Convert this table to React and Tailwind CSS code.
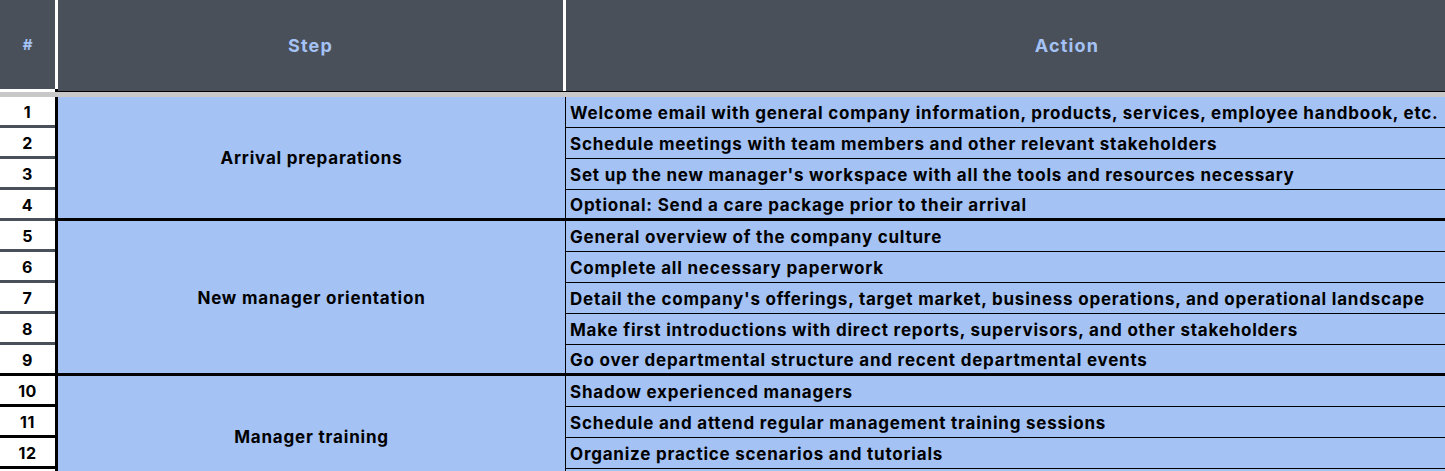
import React from "react";

const groups = [
  {
    step: "Arrival preparations",
    start: 1,
    black: false,
    actions: [
      "Welcome email with general company information, products, services, employee handbook, etc.",
      "Schedule meetings with team members and other relevant stakeholders",
      "Set up the new manager's workspace with all the tools and resources necessary",
      "Optional: Send a care package prior to their arrival",
    ],
  },
  {
    step: "New manager orientation",
    start: 5,
    black: false,
    actions: [
      "General overview of the company culture",
      "Complete all necessary paperwork",
      "Detail the company's offerings, target market, business operations, and operational landscape",
      "Make first introductions with direct reports, supervisors, and other stakeholders",
      "Go over departmental structure and recent departmental events",
    ],
  },
  {
    step: "Manager training",
    start: 10,
    black: true,
    actions: [
      "Shadow experienced managers",
      "Schedule and attend regular management training sessions",
      "Organize practice scenarios and tutorials",
      "Review performance management and feedback processes",
    ],
  },
];

function Group({ g }) {
  return (
    <div className="flex">
      <div className="flex w-[55px] shrink-0 flex-col">
        {g.actions.map((_, i) => {
          const isLast = i === g.actions.length - 1;
          const black = g.black || (isLast && g.start === 5);
          return (
            <div
              key={i}
              className={
                "flex h-[31px] items-center justify-center border-b-[3px] bg-white pt-[1px] text-[16px] font-bold tracking-[0.5px] text-black " +
                (black ? "border-black" : "border-[#4a5059]")
              }
            >
              {g.start + i}
            </div>
          );
        })}
      </div>
      <div className="w-[3px] shrink-0 bg-black" />
      <div className="flex shrink-0 border-b-[3px] border-black">
        <div className="flex w-[507px] shrink-0 items-center justify-center bg-[#a4c2f4] pt-[3px] text-[17px] font-bold tracking-[0.8px] text-black">
          {g.step}
        </div>
        <div className="flex w-[1002px] shrink-0 flex-col border-l border-black bg-[#a4c2f4]">
          {g.actions.map((a, i) => {
            const isLast = i === g.actions.length - 1;
            return (
              <div
                key={i}
                className={
                  "flex items-center whitespace-nowrap pl-[4px] pt-[3px] text-[17px] font-bold tracking-[0.78px] text-black " +
                  (isLast ? "h-[28px]" : "h-[31px] border-b border-black")
                }
              >
                {a}
              </div>
            );
          })}
        </div>
      </div>
    </div>
  );
}

export default function App() {
  return (
    <div
      className="h-[471px] w-[1445px] overflow-hidden bg-white"
      style={{ fontFamily: "Inter, 'Liberation Sans', sans-serif" }}
    >
      <div className="w-[1570px]">
        <div className="flex h-[92px]">
          <div className="flex w-[55px] shrink-0 items-center justify-center border-b-[3px] border-white bg-[#4a5059] pt-[2px] text-[15px] font-bold text-[#a4c2f4]">
            #
          </div>
          <div className="flex w-[3px] shrink-0 flex-col">
            <div className="flex-1 bg-white" />
            <div className="h-[3px] bg-black" />
          </div>
          <div className="flex w-[505px] shrink-0 items-center justify-center border-b border-black bg-[#4a5059] text-[18px] font-bold tracking-[1.2px] text-[#a4c2f4]">
            Step
          </div>
          <div className="w-[3px] shrink-0 border-b border-black bg-white" />
          <div className="flex w-[1002px] shrink-0 items-center justify-center border-b border-black bg-[#4a5059] text-[18px] font-bold tracking-[1.2px] text-[#a4c2f4]">
            Action
          </div>
        </div>
        <div className="h-[5px] bg-[#c8c8c8]" />
        {groups.map((g, i) => (
          <Group key={i} g={g} />
        ))}
      </div>
    </div>
  );
}
